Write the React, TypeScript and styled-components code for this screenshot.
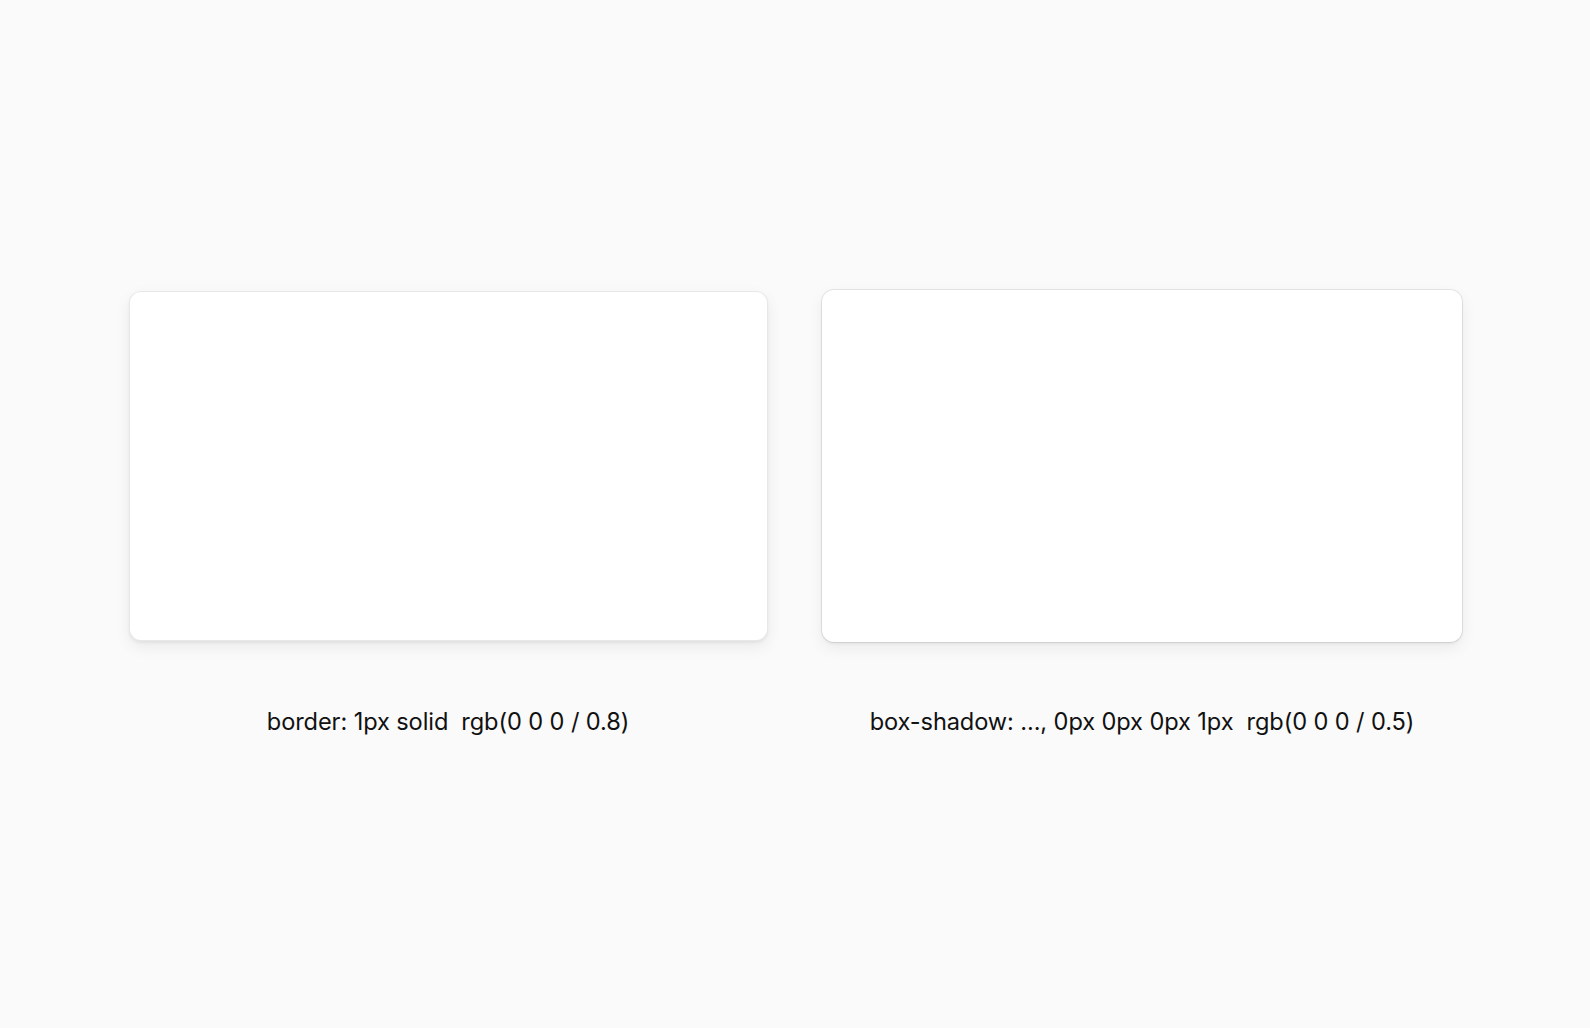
import * as React from 'react';
import styled, { createGlobalStyle } from 'styled-components';

const GlobalStyle = createGlobalStyle`
  html, body {
    margin: 0;
    padding: 0;
    background-color: #fafafa;
  }
  body {
    font-family: Inter, 'Noto Sans', sans-serif;
    color: #111;
  }
`;

const Page = styled.div`
  width: 100%;
  height: 1028px;
  display: flex;
  align-items: center;
  justify-content: center;
  padding-bottom: 2px;
  box-sizing: border-box;
`;

const Columns = styled.div`
  display: grid;
  grid-template-columns: 642px 642px;
  grid-template-rows: 354px auto;
  column-gap: 52px;
  row-gap: 64px;
  align-items: center;
  justify-items: center;
`;

// left card draws its edge with a border, right one with a 1px spread shadow
const Card = styled.div<{ $variant: 'border' | 'ring' }>`
  box-sizing: border-box;
  background-color: #fff;
  border-radius: 12px;
  width: ${(p) => (p.$variant === 'border' ? '639px' : '640px')};
  height: ${(p) => (p.$variant === 'border' ? '350px' : '352px')};
  border: ${(p) => (p.$variant === 'border' ? '1px solid rgb(0 0 0 / 0.09)' : 'none')};
  box-shadow: ${(p) =>
    p.$variant === 'border'
      ? '0px 6px 16px rgb(0 0 0 / 0.065), 0px 2px 3px rgb(0 0 0 / 0.05)'
      : '0px 6px 16px rgb(0 0 0 / 0.065), 0px 2px 3px rgb(0 0 0 / 0.05), 0px 0px 0px 1px rgb(0 0 0 / 0.08)'};
`;

const Label = styled.div`
  font-size: 23.6px;
  line-height: 30px;
  white-space: pre;
  letter-spacing: -0.1px;
`;

const App = () => (
  <>
    <GlobalStyle />
    <Page>
      <Columns>
        <Card $variant="border" />
        <Card $variant="ring" />
        <Label>{'border: 1px solid  rgb(0 0 0 / 0.8)'}</Label>
        <Label>{'box-shadow: ..., 0px 0px 0px 1px  rgb(0 0 0 / 0.5)'}</Label>
      </Columns>
    </Page>
  </>
);

export default App;
